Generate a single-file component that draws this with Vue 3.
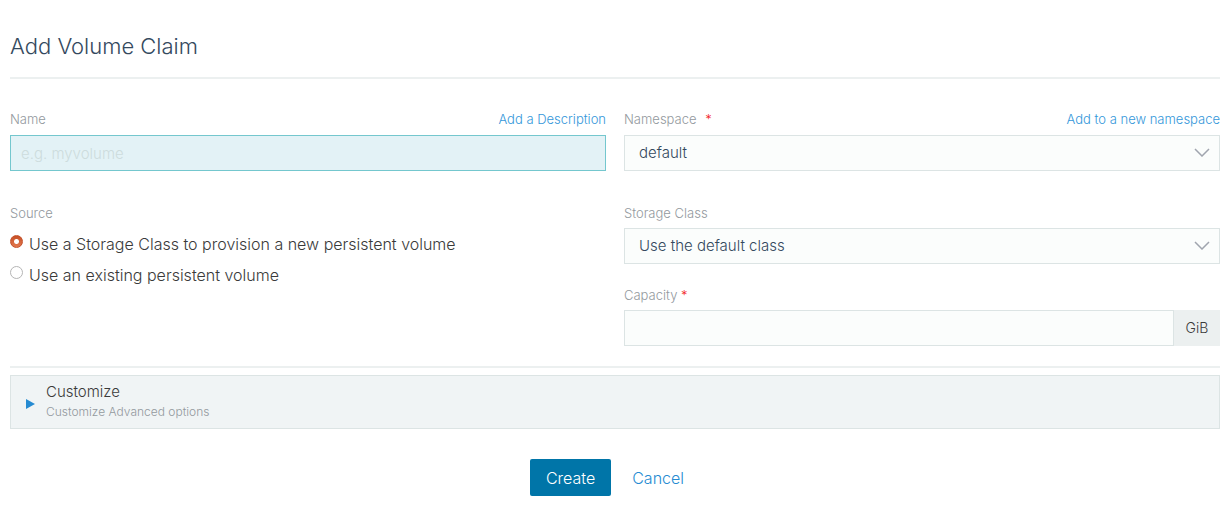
<script setup>
import { ref } from 'vue'

const name = ref('')
const namespace = ref('default')
const source = ref('class')
const storageClass = ref('default')
const capacity = ref('')
const sources = [
  { value: 'class', label: 'Use a Storage Class to provision a new persistent volume' },
  { value: 'existing', label: 'Use an existing persistent volume' },
]
</script>

<template>
  <form class="page" @submit.prevent>
    <header class="header">
      <h1>Add Volume Claim</h1>
    </header>

    <div class="row first">
      <div class="field">
        <div class="label-line">
          <label for="name">Name</label>
          <a href="#">Add a Description</a>
        </div>
        <input id="name" v-model="name" class="control name" type="text" placeholder="e.g. myvolume" />
      </div>
      <div class="field">
        <div class="label-line">
          <label for="namespace">Namespace <span class="required spaced">*</span></label>
          <a href="#">Add to a new namespace</a>
        </div>
        <div class="select">
          <select id="namespace" v-model="namespace" class="control">
            <option value="default">default</option>
          </select>
          <svg class="chevron" viewBox="0 0 16 9" aria-hidden="true"><path d="M1 1l7 7 7-7" /></svg>
        </div>
      </div>
    </div>

    <div class="row second">
      <fieldset class="field">
        <legend>Source</legend>
        <label v-for="s in sources" :key="s.value" class="choice">
          <input v-model="source" type="radio" name="source" :value="s.value" />
          <span>{{ s.label }}</span>
        </label>
      </fieldset>
      <div class="stack">
        <div class="field">
          <div class="label-line"><label for="storage">Storage Class</label></div>
          <div class="select">
            <select id="storage" v-model="storageClass" class="control">
              <option value="default">Use the default class</option>
            </select>
            <svg class="chevron" viewBox="0 0 16 9" aria-hidden="true"><path d="M1 1l7 7 7-7" /></svg>
          </div>
        </div>
        <div class="field">
          <div class="label-line">
            <label for="capacity">Capacity <span class="required">*</span></label>
          </div>
          <div class="group">
            <input id="capacity" v-model="capacity" class="control" type="text" />
            <span class="unit">GiB</span>
          </div>
        </div>
      </div>
    </div>

    <hr />

    <button type="button" class="accordion" aria-expanded="false">
      <svg class="arrow" viewBox="0 0 9 10" aria-hidden="true"><path d="M0 0l9 5-9 5z" /></svg>
      <span class="accordion-text">
        <span class="accordion-title">Customize</span>
        <span class="accordion-detail">Customize Advanced options</span>
      </span>
    </button>

    <footer class="actions">
      <button type="submit" class="create">Create</button>
      <button type="button" class="cancel">Cancel</button>
    </footer>
  </form>
</template>

<style>
body {
  background: #fff;
}
</style>

<style scoped>
.page,
.page * {
  box-sizing: border-box;
}
.page {
  padding: 0 7px 0 10px;
  font-family: Inter, "Open Sans", sans-serif;
  font-size: 15px;
  font-weight: 300;
  line-height: 20px;
  color: #3a3a3a;
}
input,
select,
button {
  font: inherit;
  color: inherit;
  margin: 0;
}
a {
  color: #3497da;
  text-decoration: none;
}
.header {
  padding: 31px 0 16px;
  border-bottom: 2px solid #ecf0f0;
}
h1 {
  margin: 0;
  font-size: 22px;
  font-weight: 300;
  line-height: 30px;
  color: #34495e;
}
.row {
  display: grid;
  grid-template-columns: 1fr 1fr;
  column-gap: 18px;
}
.first {
  padding-top: 32px;
}
.second {
  padding-top: 34px;
}
.field {
  min-width: 0;
  margin: 0;
  padding: 0;
  border: 0;
}
.label-line {
  display: flex;
  justify-content: space-between;
  padding-bottom: 8px;
  font-size: 13px;
  line-height: 16px;
}
.second .label-line {
  padding-bottom: 7px;
}
.label-line label,
legend {
  color: #93999e;
}
.required {
  color: #f22222;
}
.spaced {
  padding-left: 5px;
}
.control {
  display: block;
  width: 100%;
  height: 36px;
  padding: 0 10px;
  border: 1px solid #dce4e4;
  border-radius: 0;
  background: #fbfdfc;
  color: #34495e;
  outline: none;
}
.name {
  border-color: #74c7ce;
  background: #e3f2f6;
}
.name::placeholder {
  color: #cddcdd;
  opacity: 1;
}
.select {
  position: relative;
}
select.control {
  appearance: none;
  padding: 0 40px 0 14px;
}
.chevron {
  position: absolute;
  right: 10px;
  top: 13px;
  width: 16px;
  height: 9px;
  fill: none;
  stroke: #a0a5ae;
  stroke-width: 1.5;
  pointer-events: none;
}
legend {
  padding: 0 0 7px;
  font-size: 13px;
  line-height: 16px;
}
.choice {
  display: flex;
  align-items: center;
  gap: 6px;
  height: 31px;
  font-size: 16px;
}
.choice input {
  appearance: none;
  flex: none;
  width: 13px;
  height: 13px;
  margin-bottom: 4px;
  border: 1px solid #b5b5b5;
  border-radius: 50%;
  background: #fff;
}
.choice input:checked {
  border-color: #c4502a;
  background: radial-gradient(circle, #fff 0 2px, transparent 3px), linear-gradient(#c64f25, #e37a50);
}
.stack {
  display: grid;
  row-gap: 23px;
}
.group {
  display: flex;
}
.group .control {
  flex: 1;
  min-width: 0;
}
.unit {
  width: 46px;
  background: #ecf0f0;
  font-size: 14px;
  line-height: 36px;
  text-align: center;
}
hr {
  height: 2px;
  margin: 20px 0 7px;
  border: 0;
  background: #ecf0f0;
}
.accordion {
  display: flex;
  align-items: center;
  gap: 11px;
  width: 100%;
  padding: 6px 15px;
  border: 1px solid #dce4e4;
  background: #f0f4f5;
  text-align: left;
}
.arrow {
  width: 9px;
  height: 10px;
  margin-top: 4px;
  fill: #268bd2;
}
.accordion-text {
  display: grid;
}
.accordion-title {
  line-height: 20px;
}
.accordion-detail {
  color: #93999e;
  font-size: 12px;
  line-height: 20px;
}
.actions {
  display: flex;
  justify-content: center;
  gap: 5px;
  padding: 30px 0;
}
.actions button {
  height: 37px;
  padding: 0 16px;
  border: 0;
  border-radius: 2px;
  font-size: 16px;
}
.create {
  background: #0075a8;
  color: #fff;
}
.cancel {
  background: none;
  color: #268bd2;
}
</style>
